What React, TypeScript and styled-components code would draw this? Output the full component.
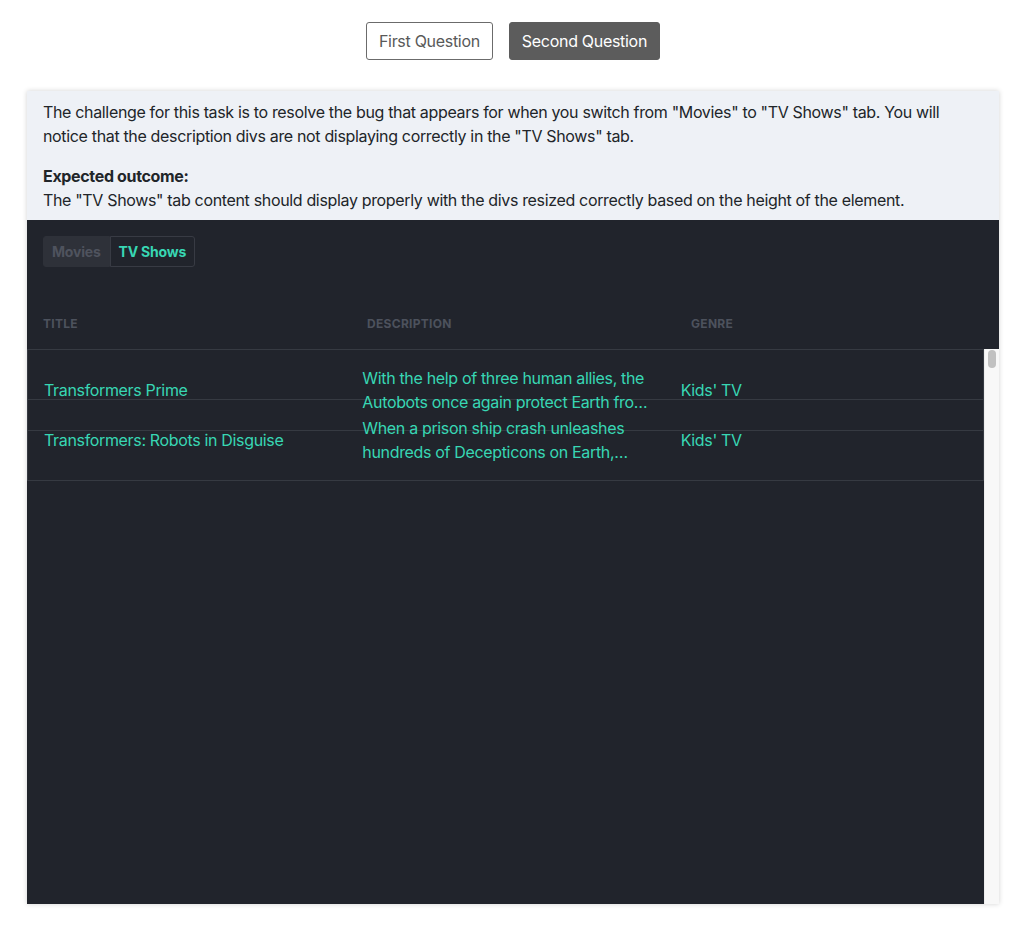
import React from "react";
import styled, { createGlobalStyle } from "styled-components";

const GlobalStyle = createGlobalStyle`
  html, body { margin: 0; padding: 0; background: #ffffff; }
  body {
    font-family: Inter, "Noto Sans", "Liberation Sans", sans-serif;
    color: #212529;
    letter-spacing: -0.34px;
  }
  * { box-sizing: border-box; }
`;

const Page = styled.div`
  width: 1030px;
  padding: 22px 31px 27px 27px;
`;

const ButtonBar = styled.div`
  display: flex;
  justify-content: center;
  gap: 16px;
  margin-bottom: 31px;
`;

const QuestionButton = styled.button<{ $active?: boolean }>`
  height: 38px;
  padding: 0 12px;
  font-family: inherit;
  font-size: 16px;
  letter-spacing: -0.3px;
  border-radius: 3px;
  cursor: pointer;
  border: 1px solid ${(p) => (p.$active ? "#5c5c5c" : "#6b6b6b")};
  background: ${(p) => (p.$active ? "#5c5c5c" : "#ffffff")};
  color: ${(p) => (p.$active ? "#ffffff" : "#595959")};
`;

const Card = styled.div`
  width: 972px;
  height: 813px;
  display: flex;
  flex-direction: column;
  box-shadow: 0 0 5px rgba(0, 0, 0, 0.18);
  background: #21242c;
`;

const Intro = styled.div`
  background: #eef1f6;
  padding: 9px 16px 8px;
  font-size: 16px;
  line-height: 24px;
`;

const Para = styled.p`
  margin: 0 0 16px;
  &:last-child { margin-bottom: 0; }
`;

const Strong = styled.strong`
  font-weight: 700;
  display: block;
`;

const Dark = styled.div`
  flex: 1;
  min-height: 0;
  display: flex;
  flex-direction: column;
  background: #21242c;
`;

const Tabs = styled.div`
  display: flex;
  margin: 16px 0 0 16px;
`;

const Tab = styled.button<{ $active?: boolean }>`
  height: 31px;
  padding: 0 8px;
  font-family: inherit;
  font-size: 14px;
  font-weight: 700;
  letter-spacing: -0.2px;
  cursor: pointer;
  border: 1px solid ${(p) => (p.$active ? "#383b44" : "#2e3139")};
  background: ${(p) => (p.$active ? "#21242c" : "#2e3139")};
  color: ${(p) => (p.$active ? "#38d7b4" : "#4f535e")};
  border-radius: ${(p) => (p.$active ? "0 3px 3px 0" : "3px 0 0 3px")};
`;

const HeaderRow = styled.div`
  display: grid;
  grid-template-columns: repeat(3, 1fr);
  padding: 51px 0 19px;
`;

const HeaderCell = styled.div`
  padding-left: 16px;
  font-size: 12px;
  line-height: 12px;
  font-weight: 700;
  letter-spacing: 0.3px;
  text-transform: uppercase;
  color: #4d525d;
`;

const ScrollArea = styled.div`
  flex: 1;
  min-height: 0;
  display: flex;
`;

const Viewport = styled.div`
  flex: 1;
  min-width: 0;
  overflow: hidden;
`;

const ScrollTrack = styled.div`
  width: 15px;
  flex: none;
  background: #f8f8f8;
  border-left: 1px solid #ededed;
  padding: 1px 3px 0 3px;
`;

const ScrollThumb = styled.div`
  height: 18px;
  border-radius: 4px;
  background: #c1c1c1;
`;

const Row = styled.div`
  display: grid;
  grid-template-columns: repeat(3, 1fr);
  align-items: center;
  border: 1px solid #363a42;
  margin-bottom: -32px;
  color: #38d7b4;
  font-size: 16px;
  line-height: 24px;
`;

const Cell = styled.div`
  padding: 16px;
  min-width: 0;
`;

const Description = styled.div`
  display: -webkit-box;
  -webkit-line-clamp: 2;
  -webkit-box-orient: vertical;
  overflow: hidden;
`;

const shows = [
  {
    title: "Transformers Prime",
    description:
      "With the help of three human allies, the Autobots once again protect Earth from the onslaught of the Decepticons and their leader, Megatron.",
    genre: "Kids' TV",
  },
  {
    title: "Transformers: Robots in Disguise",
    description:
      "When a prison ship crash unleashes hundreds of Decepticons on Earth, Bumblebee leads a new team of Autobots to hunt them down.",
    genre: "Kids' TV",
  },
];

export default function App() {
  return (
    <Page>
      <GlobalStyle />
      <ButtonBar>
        <QuestionButton>First Question</QuestionButton>
        <QuestionButton $active>Second Question</QuestionButton>
      </ButtonBar>
      <Card>
        <Intro>
          <Para>
            The challenge for this task is to resolve the bug that appears for when you switch from "Movies" to "TV
            Shows" tab. You will notice that the description divs are not displaying correctly in the "TV Shows" tab.
          </Para>
          <Para>
            <Strong>Expected outcome:</Strong>
            The "TV Shows" tab content should display properly with the divs resized correctly based on the height of
            the element.
          </Para>
        </Intro>
        <Dark>
          <Tabs>
            <Tab>Movies</Tab>
            <Tab $active>TV Shows</Tab>
          </Tabs>
          <HeaderRow>
            <HeaderCell>Title</HeaderCell>
            <HeaderCell>Description</HeaderCell>
            <HeaderCell>Genre</HeaderCell>
          </HeaderRow>
          <ScrollArea>
            <Viewport>
              {shows.map((s) => (
                <Row key={s.title}>
                  <Cell>{s.title}</Cell>
                  <Cell>
                    <Description>{s.description}</Description>
                  </Cell>
                  <Cell>{s.genre}</Cell>
                </Row>
              ))}
            </Viewport>
            <ScrollTrack>
              <ScrollThumb />
            </ScrollTrack>
          </ScrollArea>
        </Dark>
      </Card>
    </Page>
  );
}
